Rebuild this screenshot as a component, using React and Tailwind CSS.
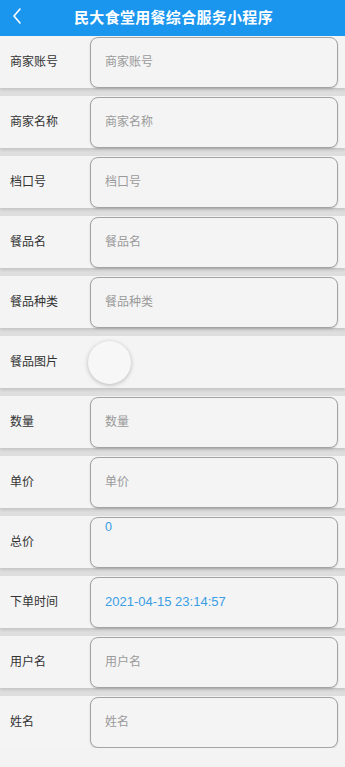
import React from 'react';

const fields = [
    { label: '商家账号', placeholder: '商家账号' },
    { label: '商家名称', placeholder: '商家名称' },
    { label: '档口号', placeholder: '档口号' },
    { label: '餐品名', placeholder: '餐品名' },
    { label: '餐品种类', placeholder: '餐品种类' },
    { label: '餐品图片', type: 'image' },
    { label: '数量', placeholder: '数量' },
    { label: '单价', placeholder: '单价' },
    { label: '总价', value: '0', type: 'top' },
    { label: '下单时间', value: '2021-04-15 23:14:57' },
    { label: '用户名', placeholder: '用户名' },
    { label: '姓名', placeholder: '姓名' },
];

const Field = ({ field }) => {
    if (field.type === 'image') {
        return (
            <div className="ml-[88px] w-[43px] h-[43px] rounded-full bg-[#f7f7f7] shadow-[0_1px_4px_rgba(0,0,0,0.25)]" />
        );
    }
    return (
        <div className="ml-[8px] flex-1 mr-[7px] h-[51px] rounded-[8px] border-[1.5px] border-[#a3a3a3] bg-[#f4f4f4] shadow-[0_1px_2px_rgba(0,0,0,0.15)] flex px-[14px]">
            {field.type === 'top' ? (
                <span className="text-[12.5px] text-[#3a9ee4] leading-none pt-[3px]">{field.value}</span>
            ) : field.value ? (
                <span className="self-center text-[13px] text-[#3a9ee4]">{field.value}</span>
            ) : (
                <span className="self-center text-[12px] text-[#9a9a9a]">{field.placeholder}</span>
            )}
        </div>
    );
};

const App = () => {
    return (
        <div
            className="w-[345px] min-h-[767px] bg-[#f3f3f3] flex flex-col"
            style={{ fontFamily: '"Liberation Sans", "Noto Sans CJK SC", sans-serif' }}
        >
            <div className="h-[36px] bg-[#1b96ef] flex items-center relative">
                <svg className="absolute left-[11px] top-[7px]" width="12" height="18" viewBox="0 0 12 18" fill="none">
                    <path d="M9 2 L3 9 L9 16" stroke="white" strokeWidth="1.6" strokeLinecap="round" strokeLinejoin="round" />
                </svg>
                <div className="w-full text-center text-white font-bold text-[15px] tracking-[0.3px] pl-[2px]">
                    民大食堂用餐综合服务小程序
                </div>
            </div>
            <div className="flex flex-col bg-[#dedede]">
                {fields.map((f, i) => (
                    <div
                        key={i}
                        className={`flex items-center h-[52px] bg-[#f4f4f4] shadow-[0_2px_3px_rgba(0,0,0,0.12)] ${i < fields.length - 1 ? 'mb-[8px]' : ''}`}
                    >
                        <div className="w-[82px] pl-[10px] text-[12px] text-[#333]">{f.label}</div>
                        {f.type === 'image' ? (
                            <div className="-ml-[82px] flex-1 flex">
                                <Field field={f} />
                            </div>
                        ) : (
                            <Field field={f} />
                        )}
                    </div>
                ))}
            </div>
            <div className="flex-1 bg-[#f3f3f3]" />
        </div>
    );
};

export default App;
